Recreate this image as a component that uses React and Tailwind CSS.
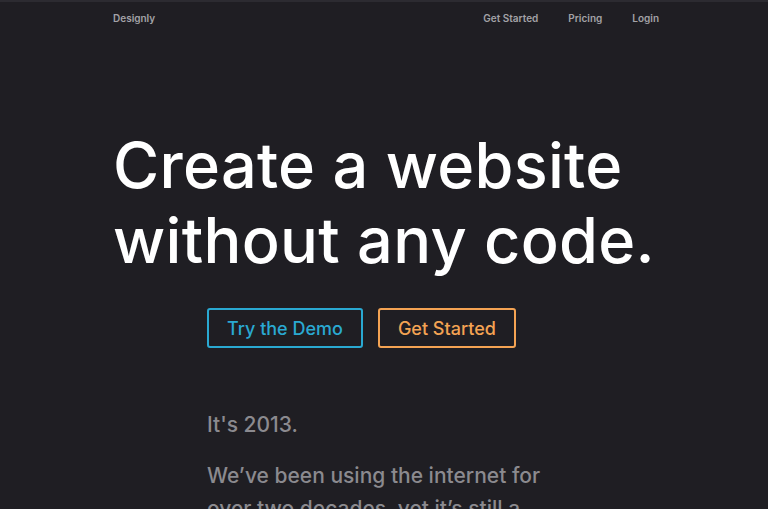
export default function App() {
  return (
    <div className="min-h-[509px] bg-[#1f1e23] border-t-2 border-[#2c2b31] text-white" style={{ fontFamily: 'Inter, "Open Sans", sans-serif' }}>
      {/* Nav */}
      <nav className="ml-[113px] w-[546px] flex items-center justify-between h-[32px] text-[10px] font-semibold text-[#a3a2a7]">
        <span>Designly</span>
        <div className="flex gap-[30px]">
          <a>Get Started</a>
          <a>Pricing</a>
          <a>Login</a>
        </div>
      </nav>

      {/* Hero */}
      <div className="ml-[113px] w-[546px] pt-[94px]">
        <h1 className="text-[63px] leading-[75px] font-medium tracking-[0.3px] whitespace-nowrap">
          Create a website
          <br />
          without any code.
        </h1>

        <div className="pl-[94px] mt-[30px] flex gap-[15px]">
          <button className="h-[40px] px-[18px] border-2 border-[#2aa9d2] rounded-[3px] text-[#2aa9d2] text-[18px] font-medium">
            Try the Demo
          </button>
          <button className="h-[40px] px-[18px] border-2 border-[#f4a353] rounded-[3px] text-[#f4a353] text-[18px] font-medium">
            Get Started
          </button>
        </div>

        <div className="pl-[94px] mt-[60px] text-[21px] leading-[33px] font-medium text-[#8b8a8f]">
          <p>It's 2013.</p>
          <p className="mt-[18px] w-[360px]">We’ve been using the internet for over two decades, yet it’s still a pain to build a website.</p>
        </div>
      </div>
    </div>
  )
}
